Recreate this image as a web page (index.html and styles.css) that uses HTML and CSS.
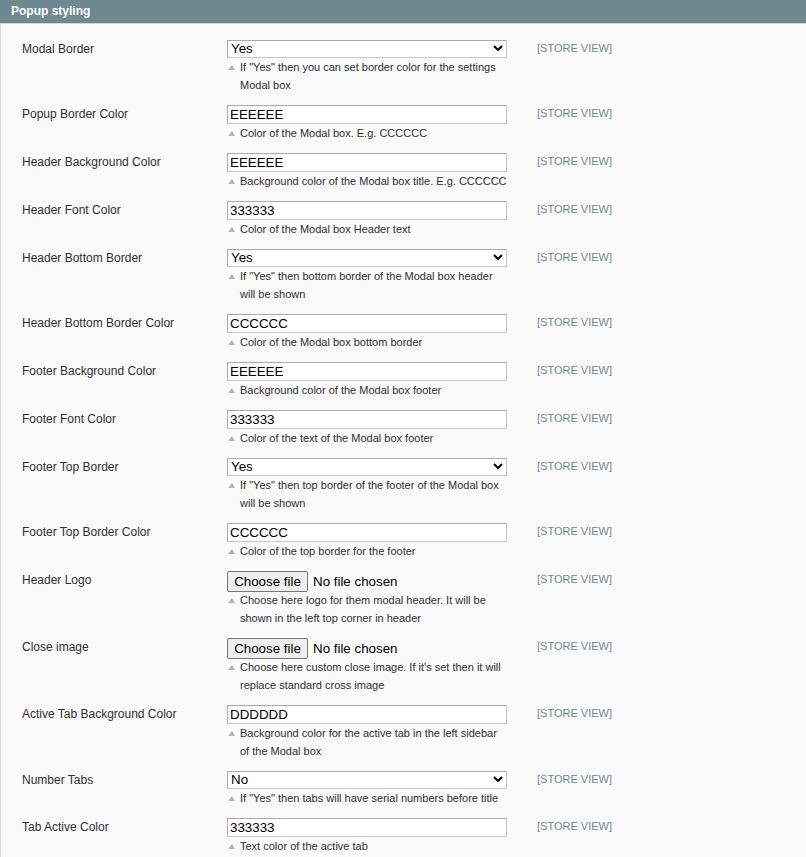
FILE: index.html
```html
<!DOCTYPE html>
<html lang="en">
<head>
<meta charset="utf-8">
<title>Popup styling</title>
<link rel="stylesheet" href="styles.css">
</head>
<body>
<div class="section">
  <div class="head"><h4>Popup styling</h4></div>
  <div class="fieldset">
    <div class="row">
      <div class="label">Modal Border</div>
      <div class="value">
        <div class="select-wrap">
          <select class="select"><option>Yes</option><option>No</option></select>
          <svg class="chev" width="10" height="6" viewBox="0 0 10 6"><polyline points="1,1 5,5 9,1" fill="none" stroke="#000" stroke-width="2"/></svg>
        </div>
        <p class="note"><span class="tri"></span><span>If "Yes" then you can set border color for the settings Modal box</span></p>
      </div>
      <div class="scope">[STORE VIEW]</div>
    </div>
    <div class="row">
      <div class="label">Popup Border Color</div>
      <div class="value">
        <input class="input" type="text" value="EEEEEE">
        <p class="note"><span class="tri"></span><span>Color of the Modal box. E.g. CCCCCC</span></p>
      </div>
      <div class="scope">[STORE VIEW]</div>
    </div>
    <div class="row">
      <div class="label">Header Background Color</div>
      <div class="value">
        <input class="input" type="text" value="EEEEEE">
        <p class="note"><span class="tri"></span><span>Background color of the Modal box title. E.g. CCCCCC</span></p>
      </div>
      <div class="scope">[STORE VIEW]</div>
    </div>
    <div class="row">
      <div class="label">Header Font Color</div>
      <div class="value">
        <input class="input" type="text" value="333333">
        <p class="note"><span class="tri"></span><span>Color of the Modal box Header text</span></p>
      </div>
      <div class="scope">[STORE VIEW]</div>
    </div>
    <div class="row">
      <div class="label">Header Bottom Border</div>
      <div class="value">
        <div class="select-wrap">
          <select class="select"><option>Yes</option><option>No</option></select>
          <svg class="chev" width="10" height="6" viewBox="0 0 10 6"><polyline points="1,1 5,5 9,1" fill="none" stroke="#000" stroke-width="2"/></svg>
        </div>
        <p class="note"><span class="tri"></span><span>If "Yes" then bottom border of the Modal box header will be shown</span></p>
      </div>
      <div class="scope">[STORE VIEW]</div>
    </div>
    <div class="row">
      <div class="label">Header Bottom Border Color</div>
      <div class="value">
        <input class="input" type="text" value="CCCCCC">
        <p class="note"><span class="tri"></span><span>Color of the Modal box bottom border</span></p>
      </div>
      <div class="scope">[STORE VIEW]</div>
    </div>
    <div class="row">
      <div class="label">Footer Background Color</div>
      <div class="value">
        <input class="input" type="text" value="EEEEEE">
        <p class="note"><span class="tri"></span><span>Background color of the Modal box footer</span></p>
      </div>
      <div class="scope">[STORE VIEW]</div>
    </div>
    <div class="row">
      <div class="label">Footer Font Color</div>
      <div class="value">
        <input class="input" type="text" value="333333">
        <p class="note"><span class="tri"></span><span>Color of the text of the Modal box footer</span></p>
      </div>
      <div class="scope">[STORE VIEW]</div>
    </div>
    <div class="row">
      <div class="label">Footer Top Border</div>
      <div class="value">
        <div class="select-wrap">
          <select class="select"><option>Yes</option><option>No</option></select>
          <svg class="chev" width="10" height="6" viewBox="0 0 10 6"><polyline points="1,1 5,5 9,1" fill="none" stroke="#000" stroke-width="2"/></svg>
        </div>
        <p class="note"><span class="tri"></span><span>If "Yes" then top border of the footer of the Modal box will be shown</span></p>
      </div>
      <div class="scope">[STORE VIEW]</div>
    </div>
    <div class="row">
      <div class="label">Footer Top Border Color</div>
      <div class="value">
        <input class="input" type="text" value="CCCCCC">
        <p class="note"><span class="tri"></span><span>Color of the top border for the footer</span></p>
      </div>
      <div class="scope">[STORE VIEW]</div>
    </div>
    <div class="row">
      <div class="label">Header Logo</div>
      <div class="value">
        <div class="file"><button class="file-btn" type="button">Choose file</button><span class="file-name">No file chosen</span></div>
        <p class="note"><span class="tri"></span><span>Choose here logo for them modal header. It will be shown in the left top corner in header</span></p>
      </div>
      <div class="scope">[STORE VIEW]</div>
    </div>
    <div class="row">
      <div class="label">Close image</div>
      <div class="value">
        <div class="file"><button class="file-btn" type="button">Choose file</button><span class="file-name">No file chosen</span></div>
        <p class="note"><span class="tri"></span><span>Choose here custom close image. If it's set then it will replace standard cross image</span></p>
      </div>
      <div class="scope">[STORE VIEW]</div>
    </div>
    <div class="row">
      <div class="label">Active Tab Background Color</div>
      <div class="value">
        <input class="input" type="text" value="DDDDDD">
        <p class="note"><span class="tri"></span><span>Background color for the active tab in the left sidebar of the Modal box</span></p>
      </div>
      <div class="scope">[STORE VIEW]</div>
    </div>
    <div class="row">
      <div class="label">Number Tabs</div>
      <div class="value">
        <div class="select-wrap">
          <select class="select"><option>No</option><option>Yes</option></select>
          <svg class="chev" width="10" height="6" viewBox="0 0 10 6"><polyline points="1,1 5,5 9,1" fill="none" stroke="#000" stroke-width="2"/></svg>
        </div>
        <p class="note"><span class="tri"></span><span>If "Yes" then tabs will have serial numbers before title</span></p>
      </div>
      <div class="scope">[STORE VIEW]</div>
    </div>
    <div class="row">
      <div class="label">Tab Active Color</div>
      <div class="value">
        <input class="input" type="text" value="333333">
        <p class="note"><span class="tri"></span><span>Text color of the active tab</span></p>
      </div>
      <div class="scope">[STORE VIEW]</div>
    </div>
  </div>
</div>
</body>
</html>
```

FILE: styles.css
```css
html, body {
  margin: 0;
  padding: 0;
  background: #fafafa;
}
body {
  font-family: "Liberation Sans", Arial, sans-serif;
  font-size: 12px;
  line-height: 18px;
  color: #2f2f2f;
}
.head {
  background: #6f8992;
  height: 23px;
  border-bottom: 1px solid #d6d6d6;
  padding: 0 11px;
}
.head h4 {
  margin: 0;
  font-size: 12px;
  font-weight: bold;
  line-height: 23px;
  color: #fff;
}
.fieldset {
  background: #fafafa;
  border-left: 1px solid #d6d6d6;
  padding: 11px 0 20px 21px;
}
.row {
  display: grid;
  grid-template-columns: 205px 280px auto;
  padding: 5px 0 6px;
}
.label {
  color: #2f2f2f;
}
.value {
  min-width: 0;
}
.scope {
  padding-left: 30px;
  font-size: 11px;
  line-height: 17px;
  color: #6f8992;
}
.input {
  display: block;
  box-sizing: border-box;
  width: 280px;
  height: 19px;
  margin: 0;
  padding: 0 2px;
  border: 1px solid;
  border-color: #aaa #c8c8c8 #c8c8c8 #aaa;
  border-radius: 0;
  background: #fff;
  font-family: "Liberation Sans", Arial, sans-serif;
  font-size: 13.33px;
  color: #000;
  outline: none;
}
.select-wrap {
  position: relative;
  width: 280px;
  height: 18px;
}
.select {
  display: block;
  box-sizing: border-box;
  width: 280px;
  height: 18px;
  margin: 0;
  padding: 0 20px 0 3px;
  border: 1px solid;
  border-color: #aaa #c8c8c8 #c8c8c8 #aaa;
  border-radius: 0;
  background-color: #fff;
  -webkit-appearance: none;
  appearance: none;
  font-family: "Liberation Sans", Arial, sans-serif;
  font-size: 13.33px;
  line-height: 16px;
  color: #000;
}
.chev {
  position: absolute;
  right: 4px;
  top: 5px;
  pointer-events: none;
}
.file {
  display: flex;
  align-items: flex-start;
  gap: 5px;
  height: 20px;
  font-family: "Liberation Sans", Arial, sans-serif;
  font-size: 13.33px;
  line-height: 21px;
  color: #000;
}
.file-btn {
  box-sizing: border-box;
  height: 21px;
  width: 81px;
  margin: 0;
  padding: 0;
  border: 1px solid #767676;
  border-radius: 2px;
  background: #efefef;
  font-family: "Liberation Sans", Arial, sans-serif;
  font-size: 13.33px;
  line-height: 19px;
  color: #000;
}
.note {
  display: flex;
  align-items: flex-start;
  width: 280px;
  margin: 0;
  font-size: 11px;
  line-height: 18px;
  color: #2f2f2f;
}
.tri {
  flex: none;
  width: 0;
  height: 0;
  margin: 7px 5px 0 1px;
  border-left: 4px solid transparent;
  border-right: 3px solid transparent;
  border-bottom: 5px solid #a9b5bb;
}
```
